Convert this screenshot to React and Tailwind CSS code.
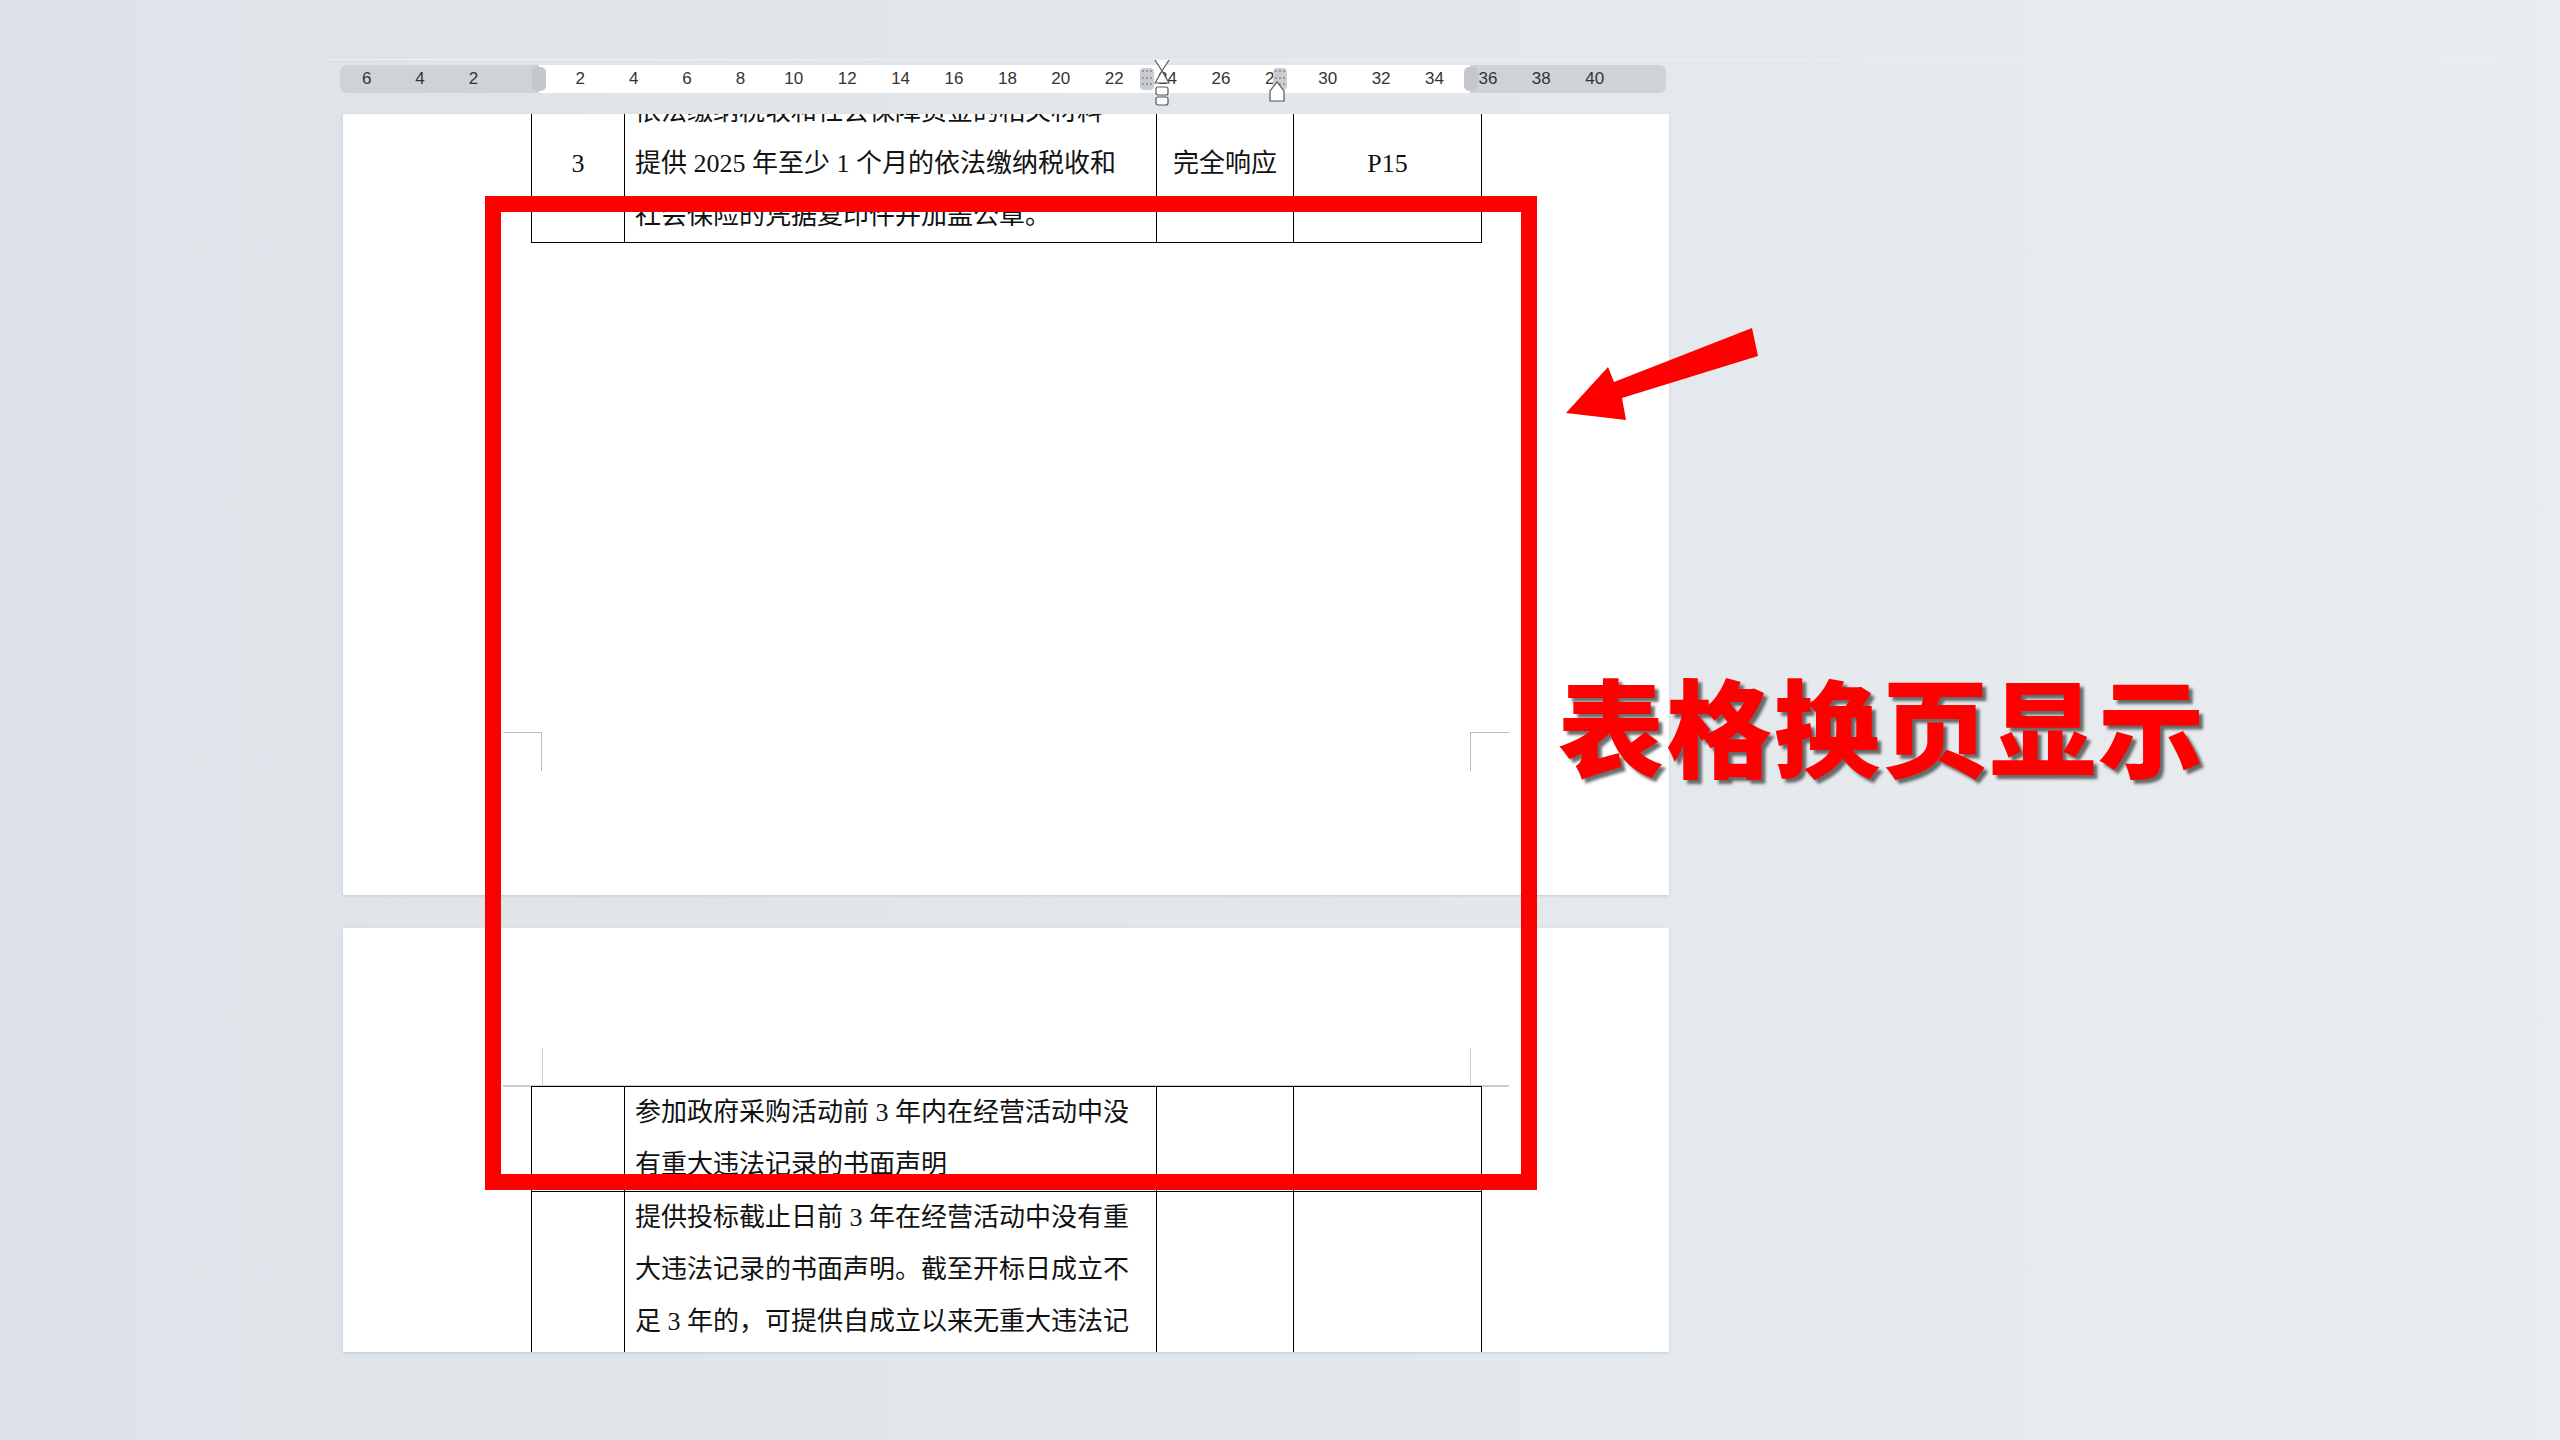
import React from "react";

const nums = ["6","4","2","","2","4","6","8","10","12","14","16","18","20","22","24","26","28","30","32","34","36","38","40"];
const F = { fontFamily: '"Liberation Serif","Noto Sans CJK SC",serif' };

function Cell({ children, className = "" }) {
  return <td className={"border border-black align-middle p-0 " + className}>{children}</td>;
}

export default function App() {
  return (
    <div className="relative w-[2560px] h-[1440px] overflow-hidden bg-gradient-to-r from-[#dde3e8] via-[#e2e7eb] to-[#e9edf0]" style={F}>
      <div className="h-[59px]" />
      <div className="ml-[327px] w-[2171px] h-px bg-[#edf0f2]" />
      {/* ruler */}
      <div className="relative ml-[340px] mt-[5px] w-[1326px] h-[28px] rounded-[6px] bg-white flex overflow-visible">
        <div className="absolute left-0 top-0 h-full w-[199px] rounded-l-[6px] bg-[#cfd3d8]" />
        <div className="absolute left-[1130px] top-0 h-full w-[196px] rounded-r-[6px] bg-[#cfd3d8]" />
        <div className="absolute left-[1370px] top-0 h-full w-0" />
        <div className="relative flex">
          {nums.map((n, i) => (
            <div key={i} className="w-[53.4px] h-[28px] flex items-center justify-center text-[17px] text-[#333]" style={{ fontFamily: '"Liberation Sans",sans-serif' }}>{n}</div>
          ))}
        </div>
        <div className="absolute left-[1124px] top-[2px] w-[14px] h-[24px] rounded-[5px] bg-[#c4c8cd]" />
        <div className="absolute left-[192px] top-[2px] w-[14px] h-[24px] rounded-[5px] bg-[#c4c8cd]" />
        <div className="absolute left-[800px] top-[3px] w-[14px] h-[22px] rounded-[4px] bg-[#c9ccd0] grid grid-cols-3 gap-[2px] p-[2px]">
          {Array.from({ length: 9 }).map((_, i) => <span key={i} className="bg-[#999] w-[2px] h-[2px]" />)}
        </div>
        <div className="absolute left-[933px] top-[3px] w-[14px] h-[22px] rounded-[4px] bg-[#c9ccd0] grid grid-cols-3 gap-[2px] p-[2px]">
          {Array.from({ length: 9 }).map((_, i) => <span key={i} className="bg-[#999] w-[2px] h-[2px]" />)}
        </div>
        <svg className="absolute left-[812px] top-[-6px]" width="20" height="48" viewBox="0 0 20 48">
          <path d="M3 1 L10 12 L17 1 M3 24 L10 12 L17 24 Z" fill="white" stroke="#555" strokeWidth="1.2" />
          <rect x="4" y="28" width="12" height="8" rx="2" fill="white" stroke="#555" strokeWidth="1.2" />
          <rect x="4" y="38" width="12" height="8" rx="2" fill="white" stroke="#555" strokeWidth="1.2" />
        </svg>
        <svg className="absolute left-[927px] top-[14px]" width="20" height="24" viewBox="0 0 20 24">
          <path d="M3 22 L3 12 L10 3 L17 12 L17 22 Z" fill="white" stroke="#555" strokeWidth="1.2" />
        </svg>
      </div>

      {/* page 1 */}
      <div className="ml-[343px] mt-[21px] w-[1326px] h-[781px] bg-white overflow-hidden relative shadow-[0_1px_3px_rgba(0,0,0,0.12)]">
        <table className="ml-[188px] mt-[-29px] border-collapse text-[26px] leading-[52px] text-[#111]">
          <tbody>
            <tr>
              <Cell className="w-[93px] text-center">3</Cell>
              <Cell className="w-[532px] px-[10px] whitespace-nowrap">
                <div>依法缴纳税收和社会保障资金的相关材料</div>
                <div>提供 2025 年至少 1 个月的依法缴纳税收和</div>
                <div>社会保险的凭据复印件并加盖公章。</div>
              </Cell>
              <Cell className="w-[137px] text-center">完全响应</Cell>
              <Cell className="w-[188px] text-center">P15</Cell>
            </tr>
          </tbody>
        </table>
        <div className="absolute left-[160px] top-[618px] w-[39px] h-[39px] border-t border-r border-[#bbb]" />
        <div className="absolute left-[1127px] top-[618px] w-[39px] h-[39px] border-t border-l border-[#bbb]" />
      </div>

      {/* page 2 */}
      <div className="ml-[343px] mt-[33px] w-[1326px] h-[424px] bg-white overflow-hidden relative shadow-[0_1px_3px_rgba(0,0,0,0.12)]">
        <div className="absolute left-[199px] top-[120px] w-px h-[38px] bg-[#ccc]" />
        <div className="absolute left-[1127px] top-[120px] w-px h-[38px] bg-[#ccc]" />
        <div className="absolute left-[160px] top-[157px] w-[1006px] h-[2px] bg-[#ccc]" />
        <table className="relative ml-[188px] mt-[158px] border-collapse text-[26px] leading-[52px] text-[#111]">
          <tbody>
            <tr>
              <Cell className="w-[93px]" />
              <Cell className="w-[532px] px-[10px] whitespace-nowrap">
                <div>参加政府采购活动前 3 年内在经营活动中没</div>
                <div>有重大违法记录的书面声明</div>
              </Cell>
              <Cell className="w-[137px]" />
              <Cell className="w-[188px]" />
            </tr>
            <tr>
              <Cell />
              <Cell className="px-[10px] whitespace-nowrap">
                <div>提供投标截止日前 3 年在经营活动中没有重</div>
                <div>大违法记录的书面声明。截至开标日成立不</div>
                <div>足 3 年的，可提供自成立以来无重大违法记</div>
                <div>录的书面声明。</div>
              </Cell>
              <Cell />
              <Cell />
            </tr>
          </tbody>
        </table>
      </div>

      {/* overlays */}
      <div className="absolute left-[485px] top-[196px] w-[1052px] h-[994px] border-[16px] border-[#ff0000]" />
      <svg className="absolute left-[1560px] top-[320px]" width="200" height="100" viewBox="0 0 200 100">
        <polygon points="192,8 198,36 62,78 66,100 6,93 48,47 54,62" fill="#ff0000" />
      </svg>
      <div className="absolute left-[1558px] top-[670px] text-[106px] font-black text-[#ff0000] leading-none tracking-[2px] [text-shadow:4px_4px_3px_rgba(60,60,60,0.75)]" style={{ fontFamily: '"Noto Sans CJK SC",sans-serif' }}>
        表格换页显示
      </div>
    </div>
  );
}
